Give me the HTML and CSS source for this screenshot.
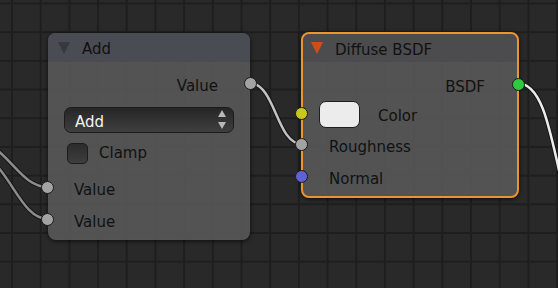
FILE: index.html
```html
<!DOCTYPE html>
<html lang="en">
<head>
  <meta charset="UTF-8" />
  <title>Node Editor</title>
  <link rel="stylesheet" href="styles.css">
</head>
<body>
  <div class="canvas">
    <svg class="links" width="558" height="288" viewBox="0 0 558 288">
      <!-- links into the Add node -->
      <path class="link-edge" d="M-30,136 C10,146 18,187 48,187" />
      <path class="link-dim" d="M-30,136 C10,146 18,187 48,187" />
      <path class="link-edge" d="M-30,146 C10,160 18,219 48,219" />
      <path class="link-dim" d="M-30,146 C10,160 18,219 48,219" />
      <!-- Add -> Roughness -->
      <path class="link-edge" d="M249,83 C276,83 276,144 302,144" />
      <path class="link-mid" d="M249,83 C276,83 276,144 302,144" />
      <!-- BSDF -> off screen -->
      <path class="link-edge" d="M517,83 C548,83 552,150 575,240" />
      <path class="link-lit" d="M517,83 C548,83 552,150 575,240" />
    </svg>

    <div class="node node-add">
      <div class="node-head"><span class="collapse"></span>Add</div>
      <div class="node-body">
        <div class="row row-out">Value<span class="socket socket-grey"></span></div>
        <div class="menu">Add
          <svg class="menu-arrows" width="8" height="20" viewBox="0 0 8 20">
            <polygon points="4,0 8,7 0,7" />
            <polygon points="0,12 8,12 4,19" />
          </svg>
        </div>
        <div class="row row-check"><span class="checkbox"></span>Clamp</div>
        <div class="row row-in"><span class="socket socket-grey"></span>Value</div>
        <div class="row row-in"><span class="socket socket-grey"></span>Value</div>
      </div>
    </div>

    <div class="node node-diffuse">
      <div class="node-head"><span class="collapse collapse-active"></span>Diffuse BSDF</div>
      <div class="node-body">
        <div class="row row-out">BSDF<span class="socket socket-shader"></span></div>
        <div class="row row-in row-color"><span class="socket socket-color"></span><span class="swatch"></span>Color</div>
        <div class="row row-in row-tall"><span class="socket socket-grey"></span>Roughness</div>
        <div class="row row-in row-tall"><span class="socket socket-vector"></span>Normal</div>
      </div>
    </div>
  </div>
</body>
</html>
```

FILE: styles.css
```css
body {
  margin: 0;
  font-family: "DejaVu Sans", sans-serif;
  font-size: 15px;
  color: #111;
}

.canvas {
  position: relative;
  width: 558px;
  height: 288px;
  overflow: hidden;
  background-color: #292929;
  background-image:
    linear-gradient(90deg, #1e1e1e 2px, transparent 2px),
    linear-gradient(180deg, #1e1e1e 2px, transparent 2px);
  background-size: 28.7px 28.7px;
  background-position: 11px 0, 0 2.5px;
}

.links {
  position: absolute;
  left: 0;
  top: 0;
}

.links path {
  fill: none;
}

.link-edge {
  stroke: #151515;
  stroke-width: 4.5;
}

.link-dim {
  stroke: #8c8c8c;
  stroke-width: 2.5;
}

.link-mid {
  stroke: #c2c2c2;
  stroke-width: 2.5;
}

.link-lit {
  stroke: #ececec;
  stroke-width: 2.5;
}

/* nodes */

.node {
  position: absolute;
  box-sizing: border-box;
  border-radius: 8px;
  box-shadow: 0 1px 4px rgba(0, 0, 0, 0.7);
}

.node-add {
  left: 48px;
  top: 33px;
  width: 202px;
  height: 207px;
  background: rgba(86, 86, 86, 0.93);
}

.node-diffuse {
  left: 301px;
  top: 32px;
  width: 218px;
  height: 166px;
  border: 2px solid #ec952a;
  background: rgba(86, 86, 86, 0.93);
}

.node-head {
  display: flex;
  align-items: center;
  box-sizing: border-box;
  height: 29px;
  padding: 3px 0 0 10px;
  border-radius: 7px 7px 0 0;
  background: rgba(74, 76, 84, 0.95);
}

.node-head .collapse {
  margin-top: -3px;
}

.node-diffuse .node-head {
  height: 28px;
  padding-left: 8px;
  background: rgba(76, 76, 78, 0.95);
}

.collapse {
  width: 0;
  height: 0;
  margin-right: 12px;
  border-left: 6px solid transparent;
  border-right: 6px solid transparent;
  border-top: 12px solid #38393e;
}

.collapse-active {
  border-top-color: #d24c18;
}

.node-body {
  padding-top: 8px;
}

.node-diffuse .node-body {
  padding-top: 9px;
}

.row {
  position: relative;
  display: flex;
  align-items: center;
  box-sizing: border-box;
  padding-top: 4px;
}

.row-out {
  height: 28px;
  justify-content: flex-end;
  padding-right: 32px;
}

.row-in {
  height: 32px;
  padding-left: 26px;
}

.row-color {
  height: 30px;
  padding-left: 16px;
}

.row-tall {
  height: 32px;
}

/* sockets */

.socket {
  position: absolute;
  top: 50%;
  width: 11px;
  height: 11px;
  margin-top: -7px;
  border: 1px solid #1a1a1a;
  border-radius: 50%;
}

.row-out .socket {
  right: -7px;
}

.row-in .socket {
  left: -7px;
}

.node-diffuse .row-in .socket {
  left: -8px;
}

.node-diffuse .row-out .socket {
  right: -8px;
}

.socket-grey {
  background: #a3a3a3;
}

.socket-shader {
  background: #2fc93f;
}

.socket-color {
  background: #c9c91d;
}

.socket-vector {
  background: #6161d6;
}

/* widgets */

.menu {
  position: relative;
  display: flex;
  align-items: center;
  box-sizing: border-box;
  height: 26px;
  margin: 9px 16px 0 16px;
  padding: 3px 0 0 10px;
  border: 1px solid #1b1b1b;
  border-radius: 7px;
  background: linear-gradient(#262626, #3f3f3f);
  color: #f2f2f2;
}

.menu-arrows {
  position: absolute;
  right: 7px;
  top: 2px;
  fill: #b8b8b8;
}

.row-check {
  height: 30px;
  margin: 5px 0 4px 0;
  padding: 0 0 0 19px;
}

.checkbox {
  box-sizing: border-box;
  width: 21px;
  height: 21px;
  margin: 0 11px 0 0;
  border: 1px solid #1c1c1c;
  border-radius: 5px;
  background: linear-gradient(#2c2c2c, #3e3e3e);
}

.swatch {
  box-sizing: border-box;
  width: 41px;
  height: 27px;
  margin: -4px 18px 0 0;
  border: 1px solid #1e1e1e;
  border-radius: 7px;
  background: #ececec;
}
```
